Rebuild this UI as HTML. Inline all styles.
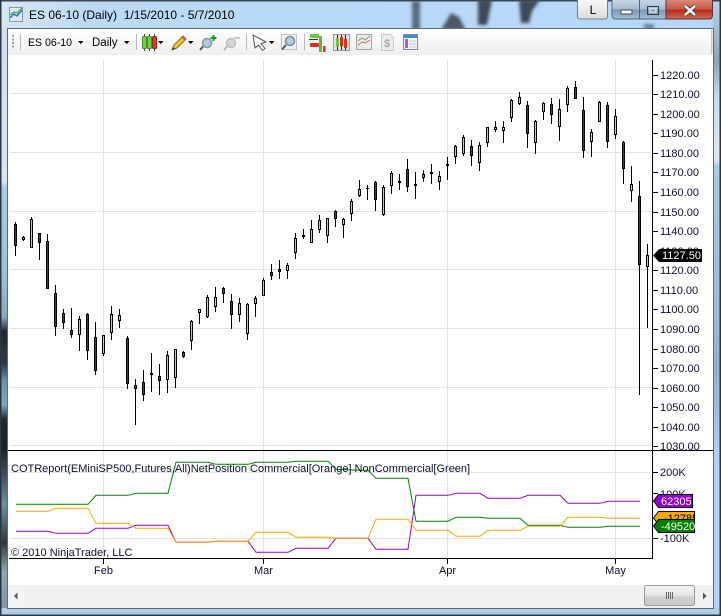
<!DOCTYPE html>
<html>
<head>
<meta charset="utf-8">
<title>ES 06-10 (Daily)</title>
<style>
html,body{margin:0;padding:0;background:#fff}
body{width:721px;height:616px;overflow:hidden}
svg{display:block;font-family:"Liberation Sans",Arial,sans-serif}
text{white-space:pre}
</style>
</head>
<body>
<svg width="721" height="616" viewBox="0 0 721 616" xmlns="http://www.w3.org/2000/svg">
<defs>
<linearGradient id="lft" x1="0" y1="0" x2="0" y2="1">
<stop offset="0" stop-color="#cfe0ee"/><stop offset=".26" stop-color="#d8e6f2"/><stop offset=".27" stop-color="#a9cbea"/>
<stop offset=".41" stop-color="#9cc0e4"/><stop offset=".49" stop-color="#8ea8c0"/><stop offset=".515" stop-color="#20282e"/>
<stop offset=".57" stop-color="#2c3a48"/><stop offset=".60" stop-color="#6d90b0"/><stop offset=".64" stop-color="#7ea4c8"/>
<stop offset=".665" stop-color="#202830"/><stop offset=".715" stop-color="#1a2228"/><stop offset=".76" stop-color="#405060"/>
<stop offset=".81" stop-color="#7090a0"/><stop offset=".875" stop-color="#30383c"/><stop offset=".925" stop-color="#90a8b0"/><stop offset="1" stop-color="#8090a0"/>
</linearGradient>
<linearGradient id="rgt" x1="0" y1="0" x2="0" y2="1">
<stop offset="0" stop-color="#b8d4ea"/><stop offset=".1" stop-color="#8fa4b6"/><stop offset=".16" stop-color="#c8dcec"/><stop offset=".26" stop-color="#dce8f2"/>
<stop offset=".27" stop-color="#a8c8e6"/><stop offset=".5" stop-color="#9cbcdc"/><stop offset=".6" stop-color="#8fb0d0"/><stop offset=".75" stop-color="#b2d4f6"/><stop offset="1" stop-color="#b2d4f6"/>
</linearGradient>
<linearGradient id="ttl" x1="0" y1="0" x2="1" y2="0">
<stop offset="0" stop-color="#d7e7f3"/><stop offset=".12" stop-color="#bcdaf6"/><stop offset="1" stop-color="#b5d7f8"/>
</linearGradient>
<linearGradient id="tb" x1="0" y1="0" x2="0" y2="1"><stop offset="0" stop-color="#ffffff"/><stop offset="1" stop-color="#efefef"/></linearGradient>
<linearGradient id="btnL" x1="0" y1="0" x2="0" y2="1"><stop offset="0" stop-color="#fafafa"/><stop offset="1" stop-color="#dcdcdc"/></linearGradient>
<linearGradient id="btnB" x1="0" y1="0" x2="0" y2="1"><stop offset="0" stop-color="#c8d8e8"/><stop offset=".5" stop-color="#a8bdd2"/><stop offset=".55" stop-color="#7f96ae"/><stop offset="1" stop-color="#a6c0d8"/></linearGradient>
<linearGradient id="btnR" x1="0" y1="0" x2="0" y2="1"><stop offset="0" stop-color="#dd8a7e"/><stop offset=".5" stop-color="#c85a4c"/><stop offset=".55" stop-color="#b52a1c"/><stop offset="1" stop-color="#d26a50"/></linearGradient>
<linearGradient id="thumb" x1="0" y1="0" x2="0" y2="1"><stop offset="0" stop-color="#f4f4f4"/><stop offset=".5" stop-color="#e6e6e6"/><stop offset=".55" stop-color="#d2d2d2"/><stop offset="1" stop-color="#c8c8c8"/></linearGradient>
<filter id="bl" x="-50%" y="-50%" width="200%" height="200%"><feGaussianBlur stdDeviation="1.600"/></filter>
<clipPath id="ttlclip"><rect x="0" y="0" width="721" height="29"/></clipPath>
<clipPath id="orclip"><rect x="654" y="511" width="41" height="14"/></clipPath>
</defs>

<!-- frame -->
<rect width="721" height="616" fill="#b5d7f8"/>
<rect x="0" y="0" width="721" height="29" fill="url(#ttl)"/>
<g clip-path="url(#ttlclip)"><g filter="url(#bl)" fill="#303a46">
<rect x="412" y="1" width="8" height="29" opacity=".7"/>
<path d="M441 30l10-17 8 4 7 13z" opacity=".8"/>
<path d="M478 0h14l-5 25h-9z" opacity=".9"/>
<path d="M519 0h21l-8 11-3 12h-8z" opacity=".9"/>
<rect x="644" y="24" width="10" height="6" opacity=".55"/>
</g></g>
<rect x="0" y="29" width="8" height="587" fill="url(#lft)"/>
<rect x="713" y="0" width="8" height="616" fill="url(#rgt)"/>
<rect x="0" y="608" width="721" height="8" fill="#b0cde6"/>
<rect x="0" y="0" width="721" height="1.500" fill="#3c4650"/>
<rect x="0" y="0" width="1.500" height="616" fill="#2d3640"/>
<rect x="719.500" y="0" width="1.500" height="616" fill="#2d3640"/>
<rect x="0" y="614.500" width="721" height="1.500" fill="#2d3640"/>
<rect x="7" y="28" width="707" height="581" fill="#5c6a78"/>
<rect x="8" y="29" width="705" height="579" fill="#fff"/>

<!-- title -->
<g>
<rect x="9.500" y="7.500" width="13" height="14" fill="#dfe8f2" stroke="#8898aa"/>
<path d="M10 18l4-4 3 2 5-6" fill="none" stroke="#2a6fc4" stroke-width="1.400"/>
<path d="M10 15l4-3 3 1 5-5" fill="none" stroke="#3aa63a" stroke-width="1.200"/>
</g>
<text x="29" y="19" font-size="12" fill="#000">ES 06-10 (Daily)  1/15/2010 - 5/7/2010</text>

<!-- window buttons -->
<rect x="577.500" y="-2" width="30" height="21" rx="2.500" fill="url(#btnL)" stroke="#75808c"/>
<text x="593" y="14" font-size="12" text-anchor="middle" fill="#000">L</text>
<path d="M612 -1V15q0 4 4 4H666V-1z" fill="url(#btnB)" stroke="#56636f"/>
<path d="M639.500 0V19" stroke="#56636f"/>
<path d="M666 -1V19H709q3.500 0 3.500-4V-1z" fill="url(#btnR)" stroke="#56363a"/>
<rect x="621" y="10" width="11" height="4" fill="#fff" stroke="#3d4a58"/>
<rect x="647.500" y="6.500" width="11" height="8" fill="none" stroke="#2f3c4a"/>
<rect x="650" y="9" width="6" height="3" fill="none" stroke="#eef3f8"/>
<path d="M685 6l10 9M695 6l-10 9" stroke="#3c2622" stroke-width="4.200"/>
<path d="M685 6l10 9M695 6l-10 9" stroke="#f4f0ee" stroke-width="2.600"/>

<!-- toolbar -->
<rect x="8" y="29" width="704" height="26" fill="url(#tb)"/>
<rect x="711" y="30" width="1.500" height="24" fill="#c4c8cc"/>
<path d="M12 35h2v2h-2zM12 38.500h2v2h-2zM12 42h2v2h-2zM12 45.500h2v2h-2z" fill="#a4a4a4"/>
<path d="M20.500 34V50M136.500 34V50M246.500 34V50M304.500 34V50" stroke="#b8b8b8"/>
<text x="28" y="46" font-size="11" textLength="44" lengthAdjust="spacingAndGlyphs" fill="#000">ES 06-10</text>
<path d="M78 41h5.500l-2.750 3z" fill="#000"/>
<text x="92" y="46" font-size="11.500" fill="#000">Daily</text>
<path d="M124 41h5.500l-2.750 3z" fill="#000"/>
<!-- candle icon -->
<path d="M144.500 34V51M149.500 34V51M154.500 34V51" stroke="#444"/>
<rect x="142.500" y="36.500" width="4" height="12" rx="1" fill="#6fd040" stroke="#4a8a30"/>
<rect x="147.500" y="36.500" width="4" height="12" rx="1" fill="#6fd040" stroke="#4a8a30"/>
<rect x="152.500" y="36.500" width="4" height="12" rx="1" fill="#e0352a" stroke="#8a2a20"/>
<path d="M158 41h5.500l-2.750 3z" fill="#000"/>
<!-- pencil -->
<path d="M172 50l2-5 9-9 3 3-9 9z" fill="#f2c62e" stroke="#8a6a12" stroke-linejoin="round"/>
<path d="M172 50l1-3 2 2z" fill="#333"/>
<path d="M182 37l3 3" stroke="#d9534f" stroke-width="1.500"/>
<path d="M188 41h5.500l-2.750 3z" fill="#000"/>
<!-- zoom plus -->
<circle cx="207" cy="43" r="4.500" fill="#a9cfea" stroke="#8a96a2" stroke-width="1.500"/>
<path d="M203 46.500l-3 3.500" stroke="#555" stroke-width="2"/>
<path d="M210.500 38h6M213.500 35v6" stroke="#0e9e20" stroke-width="2"/>
<!-- zoom minus -->
<circle cx="231" cy="43" r="4.500" fill="#d4d4d4" stroke="#c0c0c0" stroke-width="1.500"/>
<path d="M227 46.500l-3 3.500" stroke="#b8b8b8" stroke-width="2"/>
<path d="M234 38h6" stroke="#c8c8c8" stroke-width="2"/>
<!-- cursor -->
<path d="M253 35l13 7-5 1.500 4 5-2.500 2-4-5.500-3.500 3z" fill="#fff" stroke="#555" stroke-linejoin="round"/>
<path d="M269 41h5.500l-2.750 3z" fill="#000"/>
<!-- magnifier box -->
<rect x="281.500" y="34.500" width="15" height="15" fill="#f2f2f2" stroke="#c0c0c0"/>
<circle cx="290" cy="41" r="4.500" fill="#a9cfea" stroke="#7e8a96" stroke-width="1.500"/>
<path d="M286 45l-4 4.500" stroke="#555" stroke-width="2"/>
<!-- right icons -->
<path d="M320.500 36V52" stroke="#62b540" stroke-width="3"/>
<rect x="310" y="34" width="9" height="4" rx="1" fill="#66c63f"/>
<rect x="310" y="43" width="9" height="4" rx="1" fill="#d8321f"/>
<rect x="323" y="46" width="2.500" height="6" fill="#d8321f"/>
<path d="M309 39.500H318" stroke="#333"/>
<rect x="333.500" y="34.500" width="16" height="16" fill="#e2e2e2" stroke="#9a9a9a"/>
<path d="M337.500 35V50M341.500 35V50M345.500 35V50" stroke="#222"/>
<rect x="336" y="38" width="3" height="9" fill="#6ac83f"/>
<rect x="340" y="37" width="3" height="9" fill="#d8321f"/>
<rect x="344" y="39" width="3" height="9" fill="#d8321f"/>
<rect x="356.500" y="34.500" width="15" height="15" fill="#ececec" stroke="#a4a4a4"/>
<path d="M358 41l4-3 3 2 5-4" fill="none" stroke="#58b858"/>
<path d="M358 45l4-3 3 1 5-3" fill="none" stroke="#d86060"/>
<path d="M381.500 34.500h9l3 3v13h-12z" fill="#ededed" stroke="#c8c8c8"/>
<text x="387" y="47" font-size="11" font-weight="bold" text-anchor="middle" fill="#a8a8a8">$</text>
<rect x="403.500" y="34.500" width="14" height="15" fill="#f4f4fa" stroke="#7e8aa0"/>
<rect x="404" y="35" width="13" height="3" fill="#3f8fc6"/>
<rect x="405" y="39" width="3" height="9" fill="#a060d0"/>
<path d="M409 41h7M409 44h7M409 47h7" stroke="#c0c8d0"/>

<!-- grid -->
<path d="M10 93.500H652M10 152.500H652M10 211.500H652M10 269.500H652M10 328.500H652M10 387.500H652M10 445.500H652M10 472.500H652M10 538.500H652" stroke="#e2e2e2"/>
<path d="M103.500 60V558M263.500 60V558M447.500 60V558M615.500 60V558" stroke="#e2e2e2"/>

<!-- wicks -->
<path fill="none" stroke="#000" d="M15.500 222V256M23.500 236V241M31.500 217V248M39.500 233V260M47.500 234V289M55.500 285V336M63.500 309V329M71.500 308V338M79.500 316V351M87.500 313V360M95.500 322V375M103.500 335V356M111.500 306V340M119.500 309V328M127.500 336V389M135.500 379V425M143.500 370V401M151.500 353V392M159.500 364V395M167.500 351V393M175.500 349V388M183.500 351V358M191.500 320V350M199.500 309V324M207.500 295V318M215.500 287V312M223.500 287V303M231.500 294V329M239.500 298V322M247.500 303V340M255.500 296V317M263.500 278V296M271.500 264V280M279.500 260V279M287.500 263V279M295.500 233V259M303.500 229V239M311.500 220V243M319.500 215V233M327.500 218V243M335.500 210V227M343.500 218V238M351.500 199V221M359.500 180V197M367.500 185V200M375.500 181V211M383.500 185V216M391.500 171V194M399.500 174V190M407.500 159V192M415.500 172V199M423.500 170V182M431.500 164V184M439.500 171V190M447.500 157V180M455.500 145V164M463.500 135V156M471.500 140V166M479.500 142V171M487.500 127V147M495.500 121V132M503.500 121V143M511.500 99V122M519.500 92V105M527.500 101V148M535.500 120V154M543.500 102V120M551.500 98V124M559.500 99V141M567.500 86V112M575.500 81V99M583.500 97V158M591.500 129V157M599.500 101V122M607.500 102V148M615.500 109V139M623.500 141V184M631.500 166V202M639.500 181V395M647.500 244V328"/>
<!-- red bodies -->
<path fill="#d60000" stroke="#000" d="M14.500 224.500h2v21h-2zM38.500 233.500h2v9h-2zM46.500 241.500h2v47h-2zM54.500 293.500h2v33h-2zM62.500 313.500h2v9h-2zM70.500 330.500h2v4h-2zM86.500 314.500h2v36h-2zM94.500 337.500h2v33h-2zM126.500 338.500h2v45h-2zM134.500 385.500h2v3h-2zM142.500 382.500h2v12h-2zM158.500 376.500h2v4h-2zM182.500 352.500h2v4h-2zM222.500 288.500h2v5h-2zM230.500 301.500h2v13h-2zM270.500 272.500h2v3h-2zM278.500 269.500h2v2h-2zM334.500 211.500h2v7h-2zM374.500 182.500h2v17h-2zM406.500 169.500h2v17h-2zM470.500 146.500h2v9h-2zM526.500 105.500h2v28h-2zM550.500 104.500h2v10h-2zM574.500 87.500h2v11h-2zM582.500 110.500h2v40h-2zM606.500 105.500h2v36h-2zM622.500 142.500h2v26h-2zM638.500 196.500h2v68h-2z"/>
<!-- green bodies -->
<path fill="#90ee90" stroke="#000" d="M22.500 237.500h2v2h-2zM30.500 219.500h2v28h-2zM78.500 319.500h2v15h-2zM102.500 335.500h2v18h-2zM110.500 314.500h2v18h-2zM118.500 315.500h2v5h-2zM166.500 355.500h2v24h-2zM174.500 349.500h2v28h-2zM190.500 321.500h2v19h-2zM198.500 309.500h2v3h-2zM206.500 297.500h2v19h-2zM214.500 297.500h2v9h-2zM238.500 303.500h2v11h-2zM246.500 304.500h2v29h-2zM254.500 298.500h2v5h-2zM262.500 280.500h2v15h-2zM286.500 265.500h2v5h-2zM294.500 238.500h2v14h-2zM310.500 229.500h2v13h-2zM318.500 220.500h2v9h-2zM326.500 218.500h2v17h-2zM342.500 219.500h2v5h-2zM350.500 201.500h2v12h-2zM358.500 189.500h2v6h-2zM382.500 187.500h2v27h-2zM390.500 173.500h2v12h-2zM422.500 174.500h2v3h-2zM438.500 176.500h2v5h-2zM454.500 146.500h2v10h-2zM462.500 137.500h2v16h-2zM478.500 145.500h2v17h-2zM486.500 127.500h2v15h-2zM494.500 127.500h2v2h-2zM502.500 127.500h2v3h-2zM510.500 100.500h2v17h-2zM518.500 97.500h2v6h-2zM534.500 121.500h2v21h-2zM542.500 103.500h2v8h-2zM558.500 109.500h2v17h-2zM566.500 88.500h2v16h-2zM590.500 132.500h2v9h-2zM598.500 102.500h2v19h-2zM614.500 116.500h2v18h-2zM630.500 184.500h2v6h-2zM646.500 255.500h2v11h-2z"/>
<!-- doji -->
<path fill="#000" d="M150 373h3v2h-3zM302 235h3v2h-3zM366 188h3v1h-3zM398 181h3v2h-3zM414 184h3v2h-3zM430 172h3v2h-3zM446 164h3v2h-3z"/>

<!-- indicator lines -->
<polyline fill="none" stroke="#008000" stroke-width="1" points="16,504.300 88,504.300 96,495.300 128,495.300 136,493.300 168,493.300 176,462.300 208,462.300 216,464.300 248,464.300 256,462.300 288,462.300 296,461.300 328,461.300 336,469.300 360,470.300 368,470.300 376,478.300 408,478.300 416,521.300 448,521.300 456,517.300 480,517.300 488,518.300 520,518.300 528,525.300 560,525.300 568,527.300 600,527.300 608,526.300 640,526.300"/>
<polyline fill="none" stroke="#9400d3" stroke-width="1" points="16,531.300 48,531.300 56,533.300 88,533.300 96,528.300 128,528.300 136,525.300 168,525.300 176,542.300 208,542.300 216,541.300 248,541.300 256,552.300 288,552.300 296,548.300 328,548.300 336,538.300 368,538.300 376,549.300 408,549.300 416,495.300 448,495.300 456,493.300 480,493.300 488,498.300 520,498.300 528,495.300 560,495.300 568,503.300 600,503.300 608,501.300 640,501.300"/>
<polyline fill="none" stroke="#ffa500" stroke-width="1" points="16,511.300 48,511.300 56,508.300 88,508.300 96,523.300 128,523.300 136,528.300 168,528.300 176,542.300 208,542.300 216,541.300 248,541.300 256,532.300 288,532.300 296,537.300 328,537.300 336,538.300 368,538.300 376,519.300 408,519.300 416,530.300 448,530.300 456,536.300 480,536.300 488,530.300 520,530.300 528,526.300 560,526.300 568,517.300 600,517.300 608,518.300 640,518.300"/>

<!-- panel lines / axis -->
<path d="M8 450.500H713M9 558.500H653M652.500 60V559" stroke="#000" fill="none"/>
<path d="M103.500 558V564M263.500 558V564M447.500 558V564M615.500 558V564" stroke="#000"/>
<path stroke="#000" d="M653 75.500h5M653 94.500h5M653 114.500h5M653 133.500h5M653 153.500h5M653 172.500h5M653 192.500h5M653 212.500h5M653 231.500h5M653 270.500h5M653 290.500h5M653 309.500h5M653 329.500h5M653 349.500h5M653 368.500h5M653 388.500h5M653 407.500h5M653 427.500h5M653 446.500h5M653 472.500h5M653 493.500h5M653 538.500h5"/>

<!-- axis labels -->
<g font-size="11" fill="#0b1030">
<text x="660" y="79">1220.00</text><text x="660" y="98">1210.00</text><text x="660" y="118">1200.00</text><text x="660" y="137">1190.00</text><text x="660" y="157">1180.00</text><text x="660" y="176">1170.00</text><text x="660" y="196">1160.00</text><text x="660" y="216">1150.00</text><text x="660" y="235">1140.00</text><text x="660" y="255">1130.00</text><text x="660" y="274">1120.00</text><text x="660" y="294">1110.00</text><text x="660" y="313">1100.00</text><text x="660" y="333">1090.00</text><text x="660" y="353">1080.00</text><text x="660" y="372">1070.00</text><text x="660" y="392">1060.00</text><text x="660" y="411">1050.00</text><text x="660" y="431">1040.00</text><text x="660" y="450">1030.00</text>
<text x="660" y="476">200K</text><text x="660" y="498">100K</text><text x="660" y="542">-100K</text>
<text x="103.500" y="574" text-anchor="middle">Feb</text><text x="263.500" y="574" text-anchor="middle">Mar</text><text x="447.500" y="574" text-anchor="middle">Apr</text><text x="615.500" y="574" text-anchor="middle">May</text>
<text x="11" y="472">COTReport(EMiniSP500,Futures,All)NetPosition Commercial[Orange] NonCommercial[Green]</text>
<text x="11" y="556">© 2010 NinjaTrader, LLC</text>
</g>

<!-- price tag -->
<path d="M653 255.500l6-6.500h43v13h-43z" fill="#000"/>
<text x="662" y="259" font-size="11" fill="#fff">1127.50</text>

<!-- indicator tags -->
<path d="M653.500 501l5-6.500h34v13h-34z" fill="#9400d3" stroke="#000"/>
<text x="661" y="505" font-size="11" fill="#fff">62305</text>
<path d="M653.500 518l5-6.500h36v13h-36z" fill="#ffa500" stroke="#000"/>
<text x="664" y="522" font-size="11" fill="#000" clip-path="url(#orclip)">-12785</text>
<path d="M653.500 526l5-6.500h36v13h-36z" fill="#008000" stroke="#000"/>
<text x="661" y="530" font-size="11" fill="#fff">-49520</text>

<!-- scrollbar -->
<rect x="8" y="585" width="705" height="23" fill="#f0f0f0"/>
<rect x="8" y="585" width="17" height="23" fill="#f4f4f4"/>
<path d="M17.500 592.500v7l-3.500-3.500z" fill="#555"/>
<rect x="644.500" y="585.500" width="50" height="20" rx="2" fill="url(#thumb)" stroke="#9a9a9a"/>
<path d="M666.500 592v7M668.500 592v7M670.500 592v7M672.500 592v7" stroke="#666"/>
<path d="M703 592.500v7l3.500-3.500z" fill="#555"/>
</svg>
</body>
</html>
